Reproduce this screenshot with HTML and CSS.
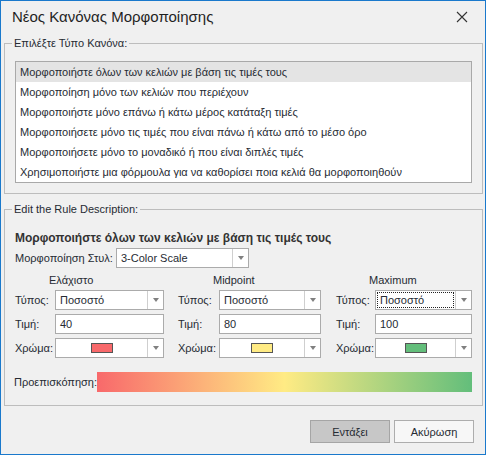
FILE: index.html
```html
<!DOCTYPE html>
<html lang="el">
<head>
<meta charset="utf-8">
<title>Νέος Κανόνας Μορφοποίησης</title>
<link rel="stylesheet" href="styles.css">
</head>
<body>
<div class="window">
  <div class="titlebar">
    <span class="title">Νέος Κανόνας Μορφοποίησης</span>
    <svg class="close" width="12" height="12" viewBox="0 0 12 12"><path d="M1 1L11 11M11 1L1 11" stroke="#333" stroke-width="1.1" fill="none"/></svg>
  </div>

  <fieldset class="group g1">
    <legend>Επιλέξτε Τύπο Κανόνα:</legend>
    <ul class="list">
      <li class="sel">Μορφοποιήστε όλων των κελιών με βάση τις τιμές τους</li>
      <li>Μορφοποίηση μόνο των κελιών που περιέχουν</li>
      <li>Μορφοποιήστε μόνο επάνω ή κάτω μέρος κατάταξη τιμές</li>
      <li>Μορφοποιήσετε μόνο τις τιμές που είναι πάνω ή κάτω από το μέσο όρο</li>
      <li>Μορφοποιήσετε μόνο το μοναδικό ή που είναι διπλές τιμές</li>
      <li>Χρησιμοποιήστε μια φόρμουλα για να καθορίσει ποια κελιά θα μορφοποιηθούν</li>
    </ul>
  </fieldset>

  <fieldset class="group g2">
    <legend>Edit the Rule Description:</legend>
    <div class="heading">Μορφοποιήστε όλων των κελιών με βάση τις τιμές τους</div>
    <div class="style-row">
      <span class="lbl">Μορφοποίηση Στυλ:</span>
      <div class="combo style-combo"><span class="val">3-Color Scale</span><span class="btn"><i class="tri"></i></span></div>
    </div>
    <div class="grid">
      <div class="colhead c1">Ελάχιστο</div>
      <div class="colhead c2">Midpoint</div>
      <div class="colhead c3">Maximum</div>

      <span class="lbl">Τύπος:</span>
      <div class="combo"><span class="val">Ποσοστό</span><span class="btn"><i class="tri"></i></span></div>
      <span></span>
      <span class="lbl">Τύπος:</span>
      <div class="combo"><span class="val">Ποσοστό</span><span class="btn"><i class="tri"></i></span></div>
      <span></span>
      <span class="lbl">Τύπος:</span>
      <div class="combo"><span class="val focus">Ποσοστό</span><span class="btn"><i class="tri"></i></span></div>

      <span class="lbl">Τιμή:</span>
      <div class="input">40</div>
      <span></span>
      <span class="lbl">Τιμή:</span>
      <div class="input">80</div>
      <span></span>
      <span class="lbl">Τιμή:</span>
      <div class="input">100</div>

      <span class="lbl">Χρώμα:</span>
      <div class="combo"><span class="val swatch-cell"><i class="swatch red"></i></span><span class="btn"><i class="tri"></i></span></div>
      <span></span>
      <span class="lbl">Χρώμα:</span>
      <div class="combo"><span class="val swatch-cell"><i class="swatch yellow"></i></span><span class="btn"><i class="tri"></i></span></div>
      <span></span>
      <span class="lbl">Χρώμα:</span>
      <div class="combo"><span class="val swatch-cell"><i class="swatch green"></i></span><span class="btn"><i class="tri"></i></span></div>
    </div>
    <div class="preview-row">
      <span class="lbl preview-lbl">Προεπισκόπηση:</span>
      <div class="gradient"></div>
    </div>
  </fieldset>

  <div class="buttons">
    <button class="button ok">Εντάξει</button>
    <button class="button">Ακύρωση</button>
  </div>
</div>
</body>
</html>
```

FILE: styles.css
```css
* { box-sizing: border-box; }
html, body { margin: 0; padding: 0; background: #f0f0f0; }
body {
  font-family: "Liberation Sans", Arial, sans-serif;
  font-size: 11px;
  color: #262b33;
}
.window {
  width: 486px;
  height: 455px;
  border: 1px solid #1a79cc;
  background: #f0f0f0;
  display: flex;
  flex-direction: column;
}
.titlebar {
  height: 35px;
  flex: none;
  display: flex;
  align-items: center;
  justify-content: space-between;
  padding: 0 17px 4px 11px;
}
.title {
  font-size: 15px;
  color: #1f1f1f;
}
.close { display: block; margin-top: 1px; }

.group {
  margin: 0 2px 0 3px;
  border: 1px solid #bdbdbd;
  padding: 0 10px 10px 10px;
  min-width: 0;
}
.group legend {
  margin-left: -3px;
  padding: 0 2px;
  line-height: 14px;
  font-size: 11px;
}
.list {
  list-style: none;
  margin: 11px 0 0 0;
  padding: 0;
  background: #fff;
  border: 1px solid #a9a9a9;
}
.list li {
  height: 20px;
  line-height: 20px;
  padding-left: 4px;
  white-space: nowrap;
  overflow: hidden;
}
.list li.sel { background: #e4e4e4; }

.g2 { margin-top: 8px; padding-bottom: 13px; }
.heading {
  margin-top: 14px;
  font-weight: bold;
  font-size: 12px;
  line-height: 16px;
  color: #333;
  white-space: nowrap;
}
.lbl { white-space: nowrap; }
.style-row {
  margin-top: 2px;
  display: flex;
  align-items: center;
}
.style-row .lbl { width: 101px; flex: none; }
.combo, .input {
  height: 20px;
  background: #fff;
  border: 1px solid #ababab;
  display: flex;
  align-items: stretch;
}
.style-combo { width: 133px; }
.combo .val {
  flex: 1;
  display: flex;
  align-items: center;
  padding-left: 4px;
  min-width: 0;
  white-space: nowrap;
}
.combo .val.focus {
  margin: 1px;
  padding-left: 3px;
  outline: 1px dotted #222;
  outline-offset: -1px;
}
.combo .btn {
  width: 16px;
  flex: none;
  border-left: 1px solid #cfcfcf;
  display: flex;
  align-items: center;
  justify-content: center;
}
.tri {
  width: 0;
  height: 0;
  border-left: 3.5px solid transparent;
  border-right: 3.5px solid transparent;
  border-top: 4px solid #808080;
}
.input {
  align-items: center;
  padding-left: 4px;
}
.grid {
  display: grid;
  grid-template-columns: 40px 109px 14px 41px 102px 15px 39px 97px;
  grid-template-rows: 13px 20px 20px 20px;
  row-gap: 4px;
  margin-top: 5px;
}
.grid .lbl { display: flex; align-items: center; }
.colhead {
  line-height: 14px;
  white-space: nowrap;
}
.c1 { grid-column: 1 / 3; padding-left: 34px; }
.c2 { grid-column: 4 / 6; padding-left: 35px; }
.c3 { grid-column: 7 / 9; padding-left: 33px; }
.swatch-cell { justify-content: center; padding-left: 0 !important; }
.swatch {
  display: block;
  width: 22px;
  height: 10px;
  border: 1px solid #555;
}
.red { background: #f8696b; }
.yellow { background: #ffeb84; }
.green { background: #63be7b; }

.preview-row {
  margin-top: 14px;
  display: flex;
  align-items: center;
}
.preview-lbl { width: 82px; flex: none; margin-left: -1px; }
.gradient {
  flex: 1;
  height: 20px;
  margin-left: 1px;
  background: linear-gradient(to right, #f8696b 0%, #ffeb84 50%, #63be7b 100%);
}

.buttons {
  margin-top: 14px;
  display: flex;
  justify-content: flex-end;
  gap: 4px;
  padding-right: 11px;
}
.button {
  width: 80px;
  height: 23px;
  font-family: inherit;
  font-size: 11px;
  color: #262b33;
  background: #f7f7f7;
  border: 1px solid #adadad;
  padding: 0;
}
.button.ok { background: #c7c7c7; border-color: #a5a5a5; }
```
